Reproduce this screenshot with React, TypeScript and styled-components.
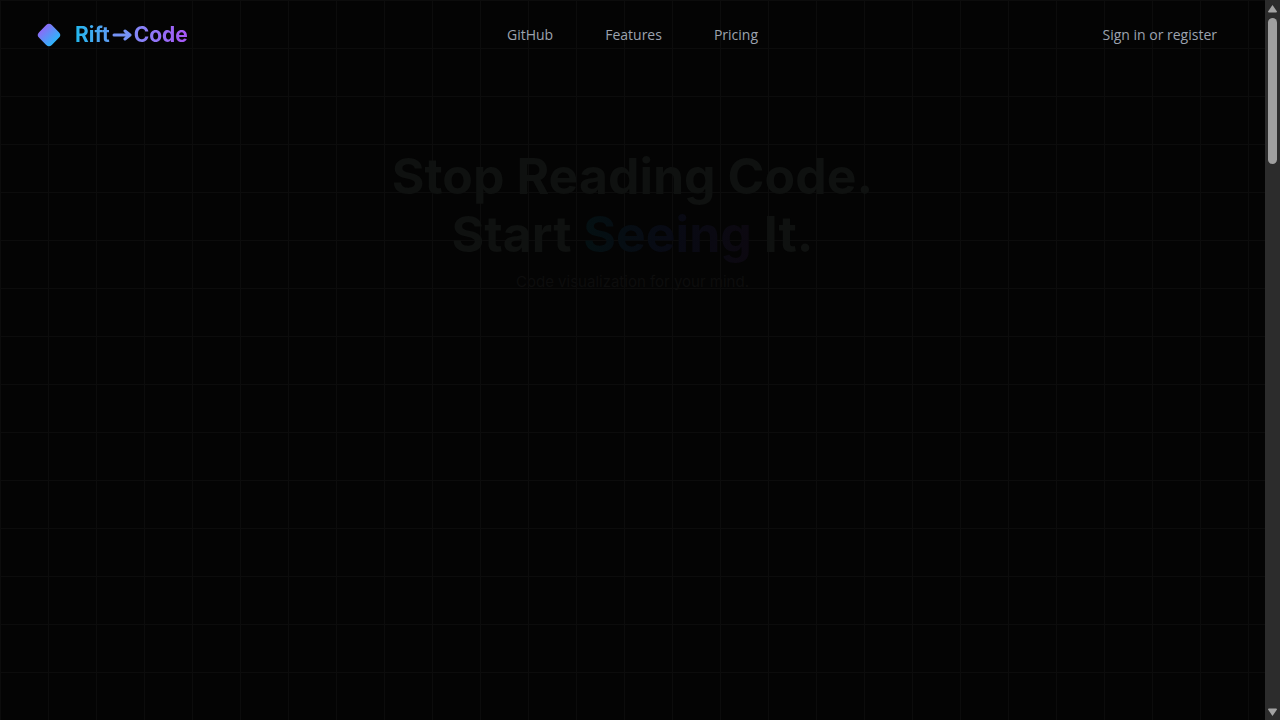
import React from "react";
import styled, { createGlobalStyle } from "styled-components";

const GlobalStyle = createGlobalStyle`
  * { box-sizing: border-box; }
  body {
    margin: 0;
    background: #040404;
    font-family: "Open Sans", "Noto Sans", sans-serif;
  }
`;

const Shell = styled.div`
  display: flex;
  min-height: 100vh;
`;

const Page = styled.div`
  flex: 1;
  min-width: 0;
  background-color: #040404;
  background-image:
    linear-gradient(to right, #0c0c0c 1px, transparent 1px),
    linear-gradient(to bottom, #0c0c0c 1px, transparent 1px);
  background-size: 48px 48px;
`;

const Header = styled.header`
  display: grid;
  grid-template-columns: 1fr auto 1fr;
  align-items: center;
  height: 70px;
  padding: 0 36px;
`;

const Brand = styled.a`
  display: flex;
  align-items: center;
  gap: 13px;
  justify-self: start;
  text-decoration: none;
`;

const BrandName = styled.span`
  font: 700 21px/28px "Inter", sans-serif;
  color: transparent;
  background: linear-gradient(90deg, #22b8ee, #818cf8 50%, #a855f7);
  background-clip: text;
  display: flex;
  align-items: center;
`;

const Arrow = styled.svg`
  margin: 0 2px;
`;

const Nav = styled.nav`
  display: flex;
  gap: 52px;
`;

const NavLink = styled.a`
  font-size: 14px;
  line-height: 20px;
  color: #9ca3af;
  text-decoration: none;
  white-space: nowrap;
`;

const SignIn = styled(NavLink)`
  justify-self: end;
  padding: 0 12px;
`;

const Hero = styled.main`
  padding: 77px 24px;
  text-align: center;
`;

const Title = styled.h1`
  margin: 0;
  font: 700 50px/58px "Inter", sans-serif;
  color: #0f1110;
`;

const Accent = styled.span`
  color: transparent;
  background: linear-gradient(90deg, #041012, #080a14 50%, #0c0810);
  background-clip: text;
`;

const Subtitle = styled.p`
  margin: 7px 0 0;
  font: 400 15px/24px "Inter", sans-serif;
  color: #0d0d0d;
`;

const ScrollTrack = styled.div`
  display: flex;
  flex-direction: column;
  align-items: center;
  justify-content: space-between;
  width: 15px;
  background: #2c2c2c;
`;

const ScrollTop = styled.div`
  display: flex;
  flex-direction: column;
  align-items: center;
`;

const ScrollArrow = styled.svg`
  display: block;
`;

const ScrollThumb = styled.div`
  width: 9px;
  height: 146px;
  border-radius: 5px;
  background: #9f9f9f;
`;

export default function App() {
  return (
    <>
      <GlobalStyle />
      <Shell>
        <Page>
          <Header>
            <Brand href="#">
              <svg width="26" height="26" viewBox="0 0 26 26" aria-hidden="true">
                <defs>
                  <linearGradient id="mark" x1="0" y1="0" x2="1" y2="0">
                    <stop offset="0" stopColor="#8b6cf6" />
                    <stop offset="1" stopColor="#2eb4fa" />
                  </linearGradient>
                </defs>
                <rect x="4" y="4" width="18" height="18" rx="4" fill="url(#mark)" transform="rotate(45 13 13)" />
              </svg>
              <BrandName>
                Rift
                <Arrow width="20" height="14" viewBox="0 0 20 14" fill="none" stroke="#7593f6" strokeWidth="3" strokeLinecap="round" strokeLinejoin="round" aria-hidden="true">
                  <path d="M2 7H17M13 3L18 7L13 11" />
                </Arrow>
                Code
              </BrandName>
            </Brand>
            <Nav>
              <NavLink href="#github">GitHub</NavLink>
              <NavLink href="#features">Features</NavLink>
              <NavLink href="#pricing">Pricing</NavLink>
            </Nav>
            <SignIn href="#signin">Sign in or register</SignIn>
          </Header>
          <Hero>
            <Title>
              Stop Reading Code.
              <br />
              Start <Accent>Seeing</Accent> It.
            </Title>
            <Subtitle>Code visualization for your mind.</Subtitle>
          </Hero>
        </Page>
        <ScrollTrack aria-hidden="true">
          <ScrollTop>
            <ScrollArrow width="15" height="18" viewBox="0 0 15 18">
              <path d="M7.5 5L12 11.5Q12 12.5 11 12.5H4Q3 12.5 3 11.5Z" fill="#a3a3a3" />
            </ScrollArrow>
            <ScrollThumb />
          </ScrollTop>
          <ScrollArrow width="15" height="18" viewBox="0 0 15 18">
            <path d="M7.5 14L3 7.5Q3 6.5 4 6.5H11Q12 6.5 12 7.5Z" fill="#a3a3a3" />
          </ScrollArrow>
        </ScrollTrack>
      </Shell>
    </>
  );
}
